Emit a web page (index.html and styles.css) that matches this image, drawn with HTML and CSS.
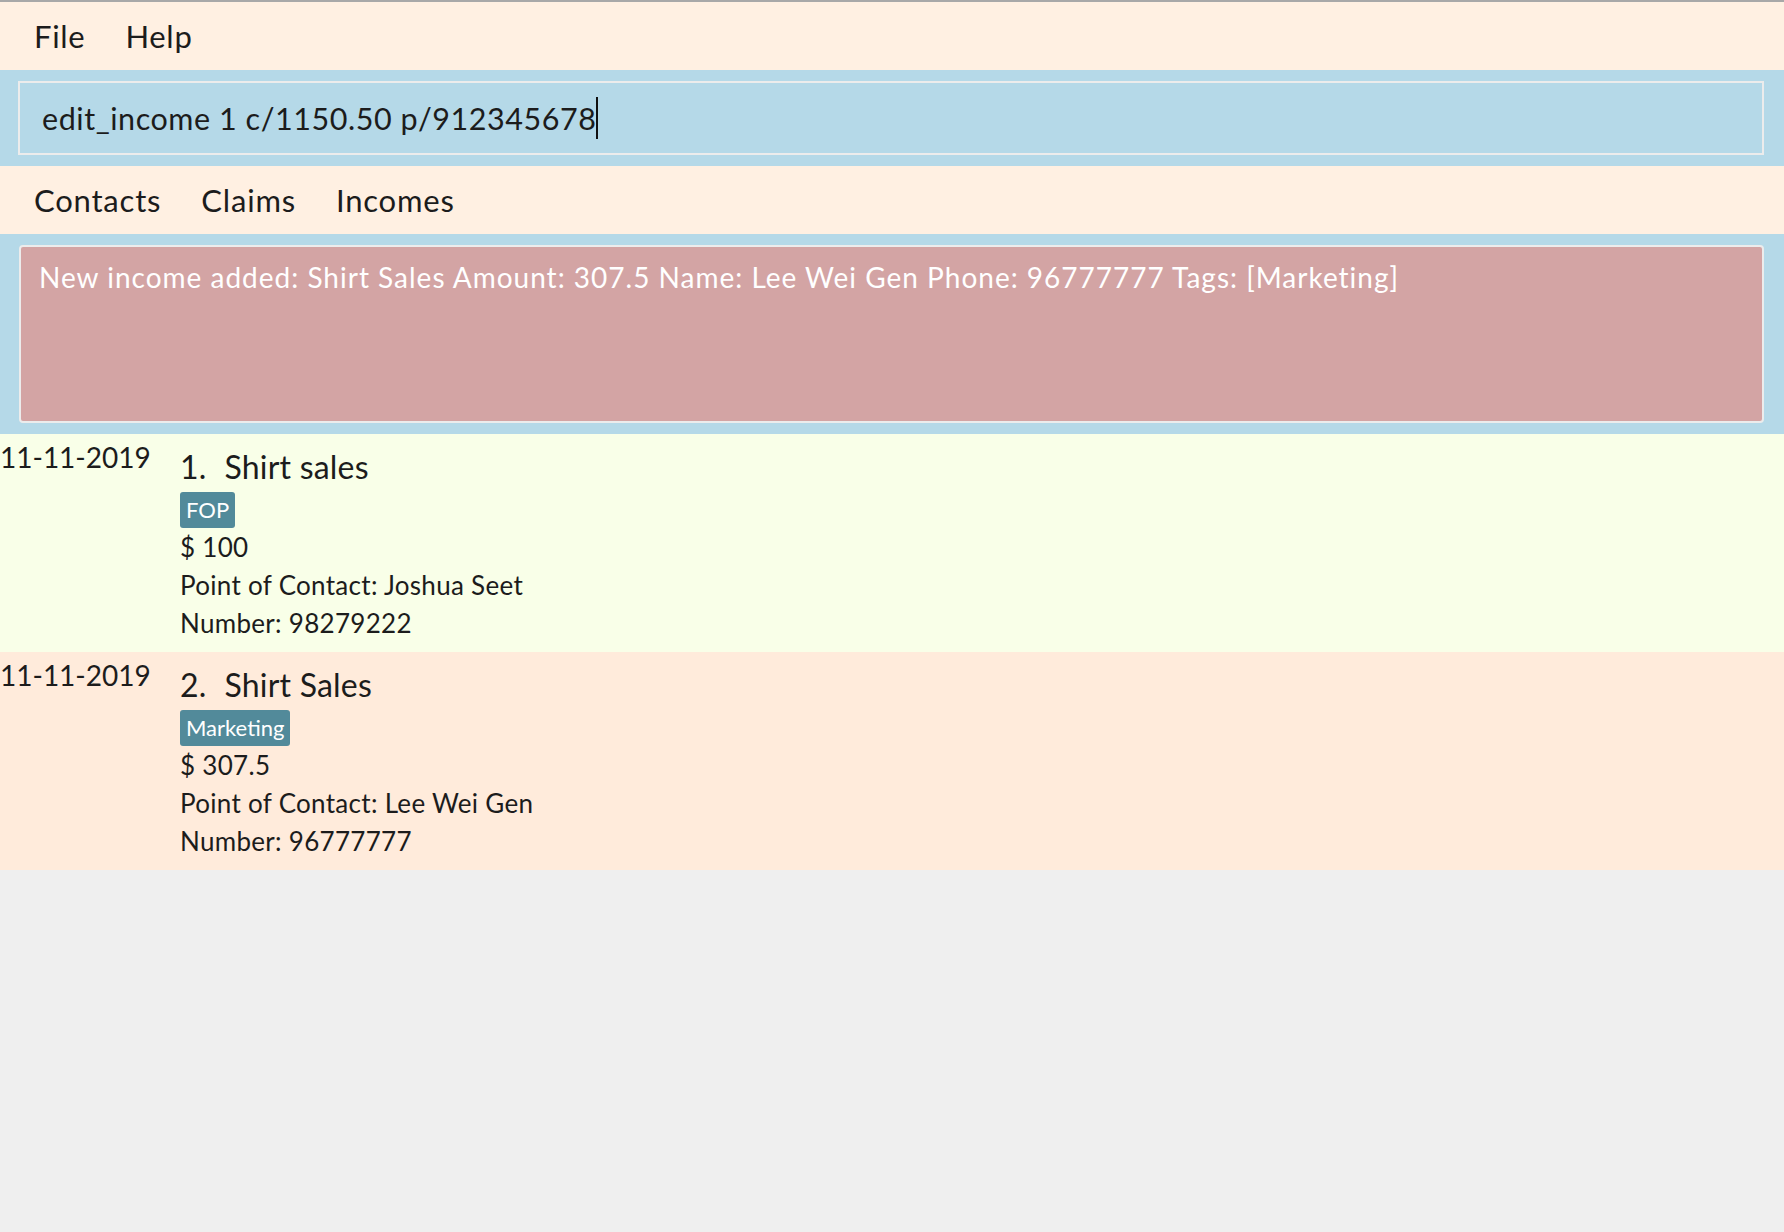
FILE: index.html
```html
<!DOCTYPE html>
<html>
<head>
<meta charset="utf-8">
<link rel="stylesheet" href="styles.css">
</head>
<body>
<div class="app">
  <div class="menubar">
    <span class="menu-item">File</span>
    <span class="menu-item">Help</span>
  </div>
  <div class="command-band">
    <div class="command-field"><span class="command-text">edit_income 1 c/1150.50 p/912345678</span><span class="caret"></span></div>
  </div>
  <div class="tabs">
    <span class="tab">Contacts</span>
    <span class="tab">Claims</span>
    <span class="tab">Incomes</span>
  </div>
  <div class="result-band">
    <div class="result-box">New income added: Shirt Sales Amount: 307.5 Name: Lee Wei Gen Phone: 96777777 Tags: [Marketing]</div>
  </div>
  <div class="list">
    <div class="row row-odd">
      <div class="date">11-11-2019</div>
      <div class="card">
        <div class="title"><span class="idx">1.</span>Shirt sales</div>
        <div class="tags"><span class="tag">FOP</span></div>
        <div class="line">$ 100</div>
        <div class="line">Point of Contact: Joshua Seet</div>
        <div class="line">Number: 98279222</div>
      </div>
    </div>
    <div class="row row-even">
      <div class="date">11-11-2019</div>
      <div class="card">
        <div class="title"><span class="idx">2.</span>Shirt Sales</div>
        <div class="tags"><span class="tag">Marketing</span></div>
        <div class="line">$ 307.5</div>
        <div class="line">Point of Contact: Lee Wei Gen</div>
        <div class="line">Number: 96777777</div>
      </div>
    </div>
  </div>
</div>
</body>
</html>
```

FILE: styles.css
```css
html, body {
  margin: 0;
  padding: 0;
  background: #efefef;
  font-family: "Lato", "Open Sans", sans-serif;
  color: #1c1c1c;
}

.app {
  display: flex;
  flex-direction: column;
}

.menubar {
  border-top: 2px solid #a8a8a8;
  background: #fff0e2;
  height: 68px;
  display: flex;
  align-items: center;
  gap: 40px;
  padding-left: 34px;
  font-size: 31px;
  letter-spacing: 0.7px;
}

.command-band {
  background: #b5d9e8;
  padding: 11px 20px 11px 18px;
}

.command-field {
  height: 70px;
  border: 2px solid #ececec;
  display: flex;
  align-items: center;
  padding-left: 22px;
  font-size: 30.5px;
  letter-spacing: 0.55px;
}

.caret {
  display: inline-block;
  width: 2px;
  height: 42px;
  background: #111;
  margin-left: 0;
}

.tabs {
  background: #fff0e2;
  height: 68px;
  display: flex;
  align-items: center;
  gap: 40px;
  padding-left: 34px;
  font-size: 31px;
  letter-spacing: 0.8px;
}

.result-band {
  background: #b5d9e8;
  padding: 11px 20px 11px 19px;
}

.result-box {
  border: 2px solid #ececec;
  border-radius: 4px;
  background: #d3a4a4;
  color: #ffffff;
  font-size: 28px;
  letter-spacing: 1px;
  padding: 13px 18px;
  box-sizing: border-box;
  height: 178px;
}

.row {
  height: 218px;
  display: flex;
  box-sizing: border-box;
}

.row-odd { background: #f9ffe8; }
.row-even { background: #ffebdb; }

.date {
  width: 180px;
  font-size: 28px;
  padding-top: 6px;
}

.card {
  display: flex;
  flex-direction: column;
  padding-top: 14px;
}

.title {
  font-size: 32px;
  line-height: 38px;
  letter-spacing: 0.2px;
}

.idx {
  margin-right: 18px;
}

.tags {
  margin-top: 6px;
  display: flex;
}

.tag {
  background: #528a9a;
  color: #fff;
  font-size: 22px;
  padding: 2px 6px;
  border-radius: 3px;
  line-height: 32px;
}

.line {
  font-size: 26px;
  letter-spacing: 0.3px;
  line-height: 38px;
}
```
